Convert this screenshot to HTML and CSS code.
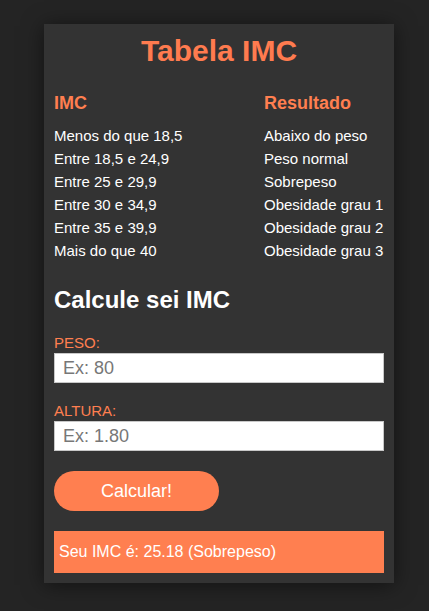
FILE: index.html
```html
<!DOCTYPE html>
<html lang="pt">
<head>
<meta charset="utf-8">
<title>Tabela IMC</title>
<link rel="stylesheet" href="styles.css">
</head>
<body>
<main class="card">
  <h1 class="title">Tabela IMC</h1>
  <table class="imc-table">
    <thead>
      <tr><th class="col-imc">IMC</th><th>Resultado</th></tr>
    </thead>
    <tbody>
      <tr><td>Menos do que 18,5</td><td>Abaixo do peso</td></tr>
      <tr><td>Entre 18,5 e 24,9</td><td>Peso normal</td></tr>
      <tr><td>Entre 25 e 29,9</td><td>Sobrepeso</td></tr>
      <tr><td>Entre 30 e 34,9</td><td>Obesidade grau 1</td></tr>
      <tr><td>Entre 35 e 39,9</td><td>Obesidade grau 2</td></tr>
      <tr><td>Mais do que 40</td><td>Obesidade grau 3</td></tr>
    </tbody>
  </table>
  <h2 class="subtitle">Calcule sei IMC</h2>
  <form class="form">
    <label class="label" for="peso">PESO:</label>
    <input class="input" id="peso" type="text" placeholder="Ex: 80">
    <label class="label label-gap" for="altura">ALTURA:</label>
    <input class="input" id="altura" type="text" placeholder="Ex: 1.80">
    <button class="button" type="button">Calcular!</button>
  </form>
  <div class="result">Seu IMC é: 25.18 (Sobrepeso)</div>
</main>
</body>
</html>
```
FILE: styles.css
```css
* { box-sizing: border-box; }
html, body {
  margin: 0;
  padding: 0;
  background: #242424;
  font-family: "Liberation Sans", Arial, sans-serif;
  color: #fff;
}
body { padding: 24px 0 28px 44px; }
.card {
  width: 350px;
  background: #333;
  padding: 10px;
  box-shadow: 0 2px 20px rgba(0, 0, 0, 0.5);
}
.title {
  margin: 0 0 25px;
  font-size: 30px;
  line-height: 33px;
  font-weight: bold;
  color: #ff7b4f;
  text-align: center;
}
.imc-table {
  width: 100%;
  border-collapse: collapse;
}
.imc-table th {
  padding: 0 0 10px;
  font-size: 18px;
  line-height: 22px;
  font-weight: bold;
  color: #ff7f50;
  text-align: left;
}
.imc-table td {
  padding: 0;
  font-size: 15px;
  line-height: 23px;
  color: #fff;
}
.col-imc { width: 210px; }
.subtitle {
  margin: 24px 0 20px;
  font-size: 24px;
  line-height: 28px;
  font-weight: bold;
  color: #fff;
}
.form { display: flex; flex-direction: column; align-items: flex-start; }
.label {
  display: block;
  font-size: 15px;
  line-height: 18px;
  color: #ff7f50;
  margin-bottom: 1px;
}
.label-gap { margin-top: 19px; }
.input {
  width: 100%;
  height: 30px;
  border: 1px solid #c8c8c8;
  background: #fff;
  padding: 0 8px;
  font-family: "Liberation Sans", Arial, sans-serif;
  font-size: 18px;
  color: #222;
  outline: none;
}
.input::placeholder { color: #777; }
.button {
  margin-top: 20px;
  width: 165px;
  height: 40px;
  border: none;
  border-radius: 20px;
  background: #ff7f50;
  color: #fff;
  font-family: "Liberation Sans", Arial, sans-serif;
  font-size: 18px;
}
.result {
  margin-top: 20px;
  background: #ff7f50;
  color: #fff;
  font-size: 16px;
  line-height: 18px;
  padding: 12px 5px;
}
```
